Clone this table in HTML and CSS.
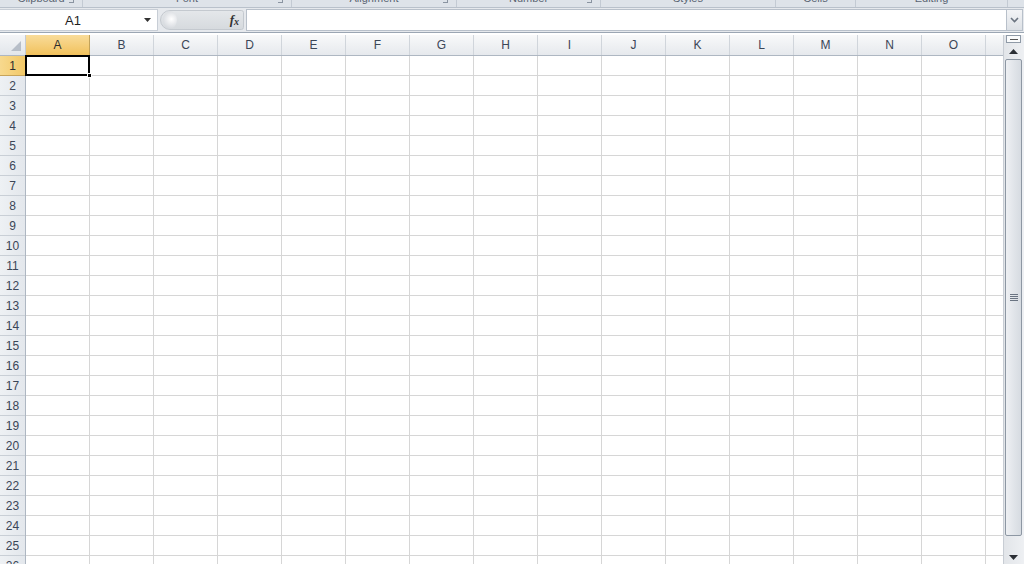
FILE: index.html
```html
<!DOCTYPE html>
<html>
<head>
<meta charset="utf-8">
<link rel="stylesheet" href="styles.css">
</head>
<body>
<div class="app">
  <div class="ribbon-strip">
    <div class="grp" style="width:83px"><span>Clipboard</span><i class="launch"></i></div>
    <div class="grp" style="width:209px"><span>Font</span><i class="launch"></i></div>
    <div class="grp" style="width:165px"><span>Alignment</span><i class="launch"></i></div>
    <div class="grp" style="width:144px"><span>Number</span><i class="launch"></i></div>
    <div class="grp" style="width:175px"><span>Styles</span></div>
    <div class="grp" style="width:80px"><span>Cells</span></div>
    <div class="grp" style="width:152px"><span>Editing</span></div>
    <div class="grp last"></div>
  </div>
  <div class="formula-bar">
    <div class="namebox">
      <span class="name">A1</span>
      <svg class="dd" width="8" height="5" viewBox="0 0 8 5"><path d="M0 0h7L3.5 4z" fill="#333"/></svg>
    </div>
    <div class="pill">
      <span class="knob"></span>
      <span class="fx">f<sub>x</sub></span>
    </div>
    <div class="input"></div>
    <div class="expand">
      <svg width="9" height="6" viewBox="0 0 9 6"><path d="M1 1l3.5 3.5L8 1" fill="none" stroke="#6b7480" stroke-width="1.6"/></svg>
    </div>
  </div>
  <div class="sheet-wrap">
    <div class="sheet">
      <div class="corner"><svg width="10" height="10" viewBox="0 0 10 10"><path d="M10 0V10H0z" fill="#b7bec8"/></svg></div>
      <div class="colheads">
        <div class="ch sel">A</div><div class="ch">B</div><div class="ch">C</div><div class="ch">D</div>
        <div class="ch">E</div><div class="ch">F</div><div class="ch">G</div><div class="ch">H</div>
        <div class="ch">I</div><div class="ch">J</div><div class="ch">K</div><div class="ch">L</div>
        <div class="ch">M</div><div class="ch">N</div><div class="ch">O</div><div class="ch">P</div>
      </div>
      <div class="rowheads">
        <div class="rh sel">1</div><div class="rh">2</div><div class="rh">3</div><div class="rh">4</div>
        <div class="rh">5</div><div class="rh">6</div><div class="rh">7</div><div class="rh">8</div>
        <div class="rh">9</div><div class="rh">10</div><div class="rh">11</div><div class="rh">12</div>
        <div class="rh">13</div><div class="rh">14</div><div class="rh">15</div><div class="rh">16</div>
        <div class="rh">17</div><div class="rh">18</div><div class="rh">19</div><div class="rh">20</div>
        <div class="rh">21</div><div class="rh">22</div><div class="rh">23</div><div class="rh">24</div>
        <div class="rh">25</div><div class="rh">26</div>
      </div>
      <div class="cells">
        <div class="active"><span class="handle"></span></div>
      </div>
    </div>
    <div class="vscroll">
      <div class="split"><span></span></div>
      <div class="arrow up"><svg width="9" height="5" viewBox="0 0 9 5"><path d="M0 5L4.5 0 9 5z" fill="#2b2f35"/></svg></div>
      <div class="track">
        <div class="thumb"><span class="grip"></span></div>
      </div>
      <div class="arrow down"><svg width="9" height="5" viewBox="0 0 9 5"><path d="M0 0L4.5 5 9 0z" fill="#2b2f35"/></svg></div>
    </div>
  </div>
</div>
</body>
</html>
```

FILE: styles.css
```css
* { box-sizing: border-box; }
html, body { margin: 0; padding: 0; }
body {
  width: 1024px;
  height: 564px;
  overflow: hidden;
  background: #fff;
  font-family: "Liberation Sans", Arial, sans-serif;
}
.app {
  display: flex;
  flex-direction: column;
  height: 564px;
}

/* ribbon group labels, clipped at top */
.ribbon-strip {
  height: 8px;
  flex: none;
  display: flex;
  overflow: hidden;
  background: #dee3e9;
  border-bottom: 1px solid #b9c1cb;
}
.grp {
  position: relative;
  flex: none;
  height: 8px;
  border-right: 1px solid #c3cad3;
  display: flex;
  justify-content: center;
  font-size: 11px;
  color: #5a6472;
}
.grp span {
  display: block;
  line-height: 11px;
  margin-top: -7px;
}
.grp.last { flex: 1; border-right: none; }
.launch {
  position: absolute;
  right: 8px;
  top: 0;
  width: 5px;
  height: 3px;
  border-right: 1px solid #8a94a1;
  border-bottom: 1px solid #8a94a1;
}

/* formula bar */
.formula-bar {
  height: 25px;
  flex: none;
  display: flex;
  align-items: stretch;
  background: #e6e9ed;
  padding: 1px 1px 1px 0;
  border-bottom: 1px solid #9ba6b3;
}
.namebox {
  width: 158px;
  flex: none;
  display: flex;
  align-items: center;
  background: #fff;
  border: 1px solid #c8ced6;
  border-left: none;
}
.name {
  flex: 1;
  text-align: center;
  font-size: 13px;
  color: #1e1e1e;
  padding-left: 6px;
}
.dd { margin: 0 5px 0 4px; }
.pill {
  width: 84px;
  flex: none;
  margin: 1px 2px 1px 2px;
  display: flex;
  align-items: center;
  justify-content: space-between;
  background: linear-gradient(#e4e7ea, #d6dade);
  border: 1px solid #c4c9cf;
  border-radius: 11px 3px 3px 11px;
  padding: 0 4px 0 2px;
}
.knob {
  width: 14px;
  height: 18px;
  border-radius: 50%;
  background: radial-gradient(circle at 60% 45%, #ffffff 0, #e8eaed 40%, #d2d6db 80%);
}
.fx {
  font-family: "Liberation Serif", "Times New Roman", serif;
  font-style: italic;
  font-weight: bold;
  font-size: 13px;
  color: #333;
  line-height: 1;
}
.fx sub { font-size: 10px; vertical-align: -1px; }
.input {
  flex: 1;
  background: #fff;
  border: 1px solid #b8c0ca;
}
.expand {
  width: 16px;
  flex: none;
  display: flex;
  align-items: center;
  justify-content: center;
  background: linear-gradient(#f3f4f6, #dde1e6);
  border: 1px solid #b8c0ca;
  border-left: none;
}

/* sheet */
.sheet-wrap {
  flex: 1;
  display: flex;
  min-height: 0;
  margin-top: 2px;
}
.sheet {
  flex: 1;
  display: grid;
  grid-template-columns: 26px 1fr;
  grid-template-rows: 21px 1fr;
  overflow: hidden;
  font-size: 12px;
  color: #3b4657;
}
.corner {
  background: linear-gradient(#f4f5f7, #e2e6eb);
  border-right: 1px solid #c5cbd3;
  border-bottom: 1px solid #aeb7c2;
  display: flex;
  align-items: flex-end;
  justify-content: flex-end;
  padding: 0 4px 4px 0;
}
.colheads {
  display: flex;
  overflow: hidden;
  border-bottom: 1px solid #aeb7c2;
}
.ch {
  flex: none;
  width: 64px;
  display: flex;
  align-items: center;
  justify-content: center;
  background: linear-gradient(#f8f9fa, #e6e9ed);
  border-right: 1px solid #d0d5db;
}
.ch.sel {
  background: linear-gradient(#f9dc9a, #f1c15c);
  border-right-color: #c2a25a;
  color: #2d2d2d;
}
.rowheads {
  display: flex;
  flex-direction: column;
  overflow: hidden;
  background: #e9edf1;
  border-right: 1px solid #aeb7c2;
}
.rh {
  flex: none;
  height: 20px;
  display: flex;
  align-items: center;
  justify-content: center;
  background: linear-gradient(to right, #eef1f4, #e3e7ec);
  border-bottom: 1px solid #c9cfd6;
}
.rh.sel {
  background: linear-gradient(to right, #f7d98e, #f2c867);
  border-bottom-color: #c7a45a;
  color: #2d2d2d;
}
.cells {
  position: relative;
  background-color: #fff;
  background-image:
    repeating-linear-gradient(to right, transparent 0 63px, #d6d6d6 63px 64px),
    repeating-linear-gradient(to bottom, transparent 0 19px, #d6d6d6 19px 20px);
}
.active {
  position: absolute;
  left: -1px;
  top: -1px;
  width: 65px;
  height: 21px;
  border: 2px solid #000;
}
.handle {
  position: absolute;
  right: -4px;
  bottom: -4px;
  width: 5px;
  height: 5px;
  background: #000;
  border: 1px solid #fff;
}

/* vertical scrollbar */
.vscroll {
  width: 21px;
  flex: none;
  display: flex;
  flex-direction: column;
  background: linear-gradient(to right, #e2e5e9, #eef0f3);
  border-left: 1px solid #c8cdd4;
  padding: 0 2px 0 1px;
}
.split {
  height: 8px;
  margin: 0 1px 2px;
  border: 1px solid #8f9aa7;
  background: #fafbfc;
  display: flex;
  align-items: center;
  justify-content: center;
}
.split span {
  width: 8px;
  height: 1px;
  background: #555;
}
.arrow {
  height: 13px;
  flex: none;
  display: flex;
  align-items: center;
  justify-content: center;
}
.track {
  flex: 1;
  display: flex;
  flex-direction: column;
  padding: 1px 0;
}
.thumb {
  flex: 1;
  margin-bottom: 14px;
  border: 1px solid #8d97a3;
  border-radius: 2px;
  background: linear-gradient(to right, #eef0f3, #dfe3e8 60%, #d6dbe1);
  display: flex;
  align-items: center;
  justify-content: center;
}
.grip {
  width: 8px;
  height: 7px;
  background: repeating-linear-gradient(to bottom, #6a7482 0 1px, transparent 1px 2px);
}
```
